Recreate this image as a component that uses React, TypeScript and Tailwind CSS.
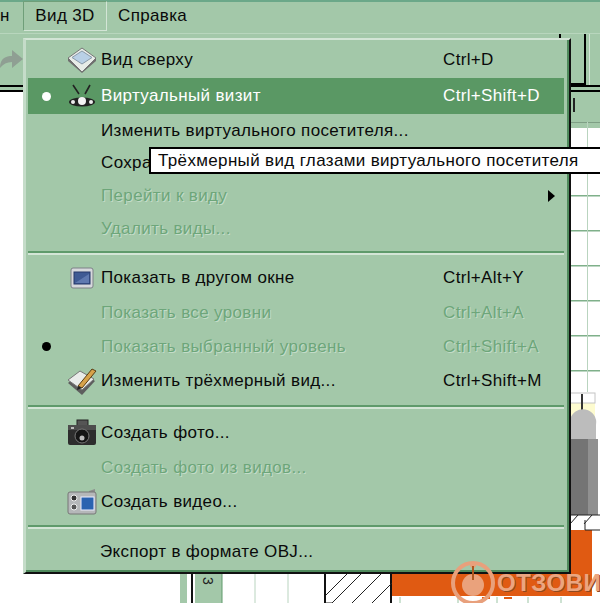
const FONT = "font-['Liberation_Sans',sans-serif]";

type Item = {
  label: string;
  row: string;
  keys?: string;
  icon?: React.ReactNode;
  bullet?: boolean;
  disabled?: boolean;
  active?: boolean;
  arrow?: boolean;
  labelClass?: string;
};

function TopViewIcon() {
  return (
    <svg width="30" height="28" viewBox="0 0 30 28">
      <path d="M15 2 L29 12 L15 26 L1 12 Z" fill="#e8ece8" stroke="#777" />
      <path d="M15 5 L25 11.5 L15 18 L5 11.5 Z" fill="#b9d0e6" stroke="#8a9aa8" />
      <path d="M1 12 L15 26 L29 12 L29 15 L15 27 L1 15 Z" fill="#6f6f6f" />
    </svg>
  );
}

function VisitorIcon() {
  return (
    <svg width="30" height="28" viewBox="0 0 30 28">
      <path d="M6 3 L12 12 M23 3 L18 12" stroke="#222" strokeWidth="1.6" />
      <ellipse cx="15" cy="20" rx="13" ry="4.5" fill="#222" />
      <circle cx="15" cy="19" r="4" fill="#f4f4f4" />
      <circle cx="6" cy="20" r="2" fill="#eee" />
      <circle cx="24" cy="20" r="2" fill="#eee" />
    </svg>
  );
}

function WindowIcon() {
  return (
    <svg width="24" height="22" viewBox="0 0 24 22">
      <rect x="1" y="1" width="22" height="20" rx="2" fill="#d6d8dc" stroke="#7d8087" />
      <rect x="4" y="5" width="16" height="12" fill="#3f5a94" stroke="#27396a" />
      <path d="M5 16 L19 7 L19 16 Z" fill="#5f79b0" />
    </svg>
  );
}

function EditViewIcon() {
  return (
    <svg width="30" height="30" viewBox="0 0 30 30">
      <path d="M14 6 L28 15 L15 29 L1 17 Z" fill="#5e5e5e" />
      <path d="M13 5 L27 13 L15 24 L1 14 Z" fill="#e9ecea" stroke="#777" />
      <path d="M11 20 L25 3 L29 5 L15 22 Z" fill="#d7a24a" stroke="#5b3d12" />
      <path d="M11 20 L10 24 L15 22 Z" fill="#222" />
    </svg>
  );
}

function CameraIcon() {
  return (
    <svg width="30" height="28" viewBox="0 0 30 28">
      <rect x="10" y="1" width="11" height="6" fill="#555" stroke="#222" />
      <rect x="1" y="6" width="28" height="20" rx="2" fill="#2d2d2d" />
      <rect x="1" y="6" width="28" height="5" fill="#4d4d4d" />
      <circle cx="15" cy="17" r="7" fill="#151515" stroke="#777" />
      <circle cx="15" cy="19" r="2.5" fill="#bbb" />
      <rect x="4" y="8" width="3" height="2" fill="#bbb" />
    </svg>
  );
}

function VideoIcon() {
  return (
    <svg width="30" height="28" viewBox="0 0 30 28">
      <path d="M22 3 L28 1 L28 8 L22 8 Z" fill="#8c8c8c" />
      <rect x="1" y="4" width="28" height="22" rx="2" fill="#b5b7b9" stroke="#777" />
      <rect x="14" y="9" width="13" height="13" fill="#2a62b0" stroke="#eef" />
      <circle cx="7" cy="10" r="3" fill="#333" stroke="#eee" />
      <circle cx="7" cy="19" r="3" fill="#555" stroke="#eee" />
    </svg>
  );
}

const GROUPS: Item[][] = [
  [
    { label: 'Вид сверху', keys: 'Ctrl+D', icon: <TopViewIcon />, row: 'h-[36px]' },
    { label: 'Виртуальный визит', keys: 'Ctrl+Shift+D', icon: <VisitorIcon />, bullet: true, active: true, row: 'h-[36px]' },
    { label: 'Изменить виртуального посетителя...', row: 'h-[33px]' },
    { label: 'Сохранить вид', row: 'h-[32px]' },
    { label: 'Перейти к виду', disabled: true, arrow: true, row: 'h-[34px]' },
    { label: 'Удалить виды...', disabled: true, row: 'h-[32px]' },
  ],
  [
    { label: 'Показать в другом окне', keys: 'Ctrl+Alt+Y', icon: <WindowIcon />, row: 'h-[34px]' },
    { label: 'Показать все уровни', keys: 'Ctrl+Alt+A', disabled: true, row: 'h-[35px]' },
    { label: 'Показать выбранный уровень', keys: 'Ctrl+Shift+A', disabled: true, bullet: true, row: 'h-[33px]' },
    { label: 'Изменить трёхмерный вид...', keys: 'Ctrl+Shift+M', icon: <EditViewIcon />, row: 'h-[35px]' },
  ],
  [
    { label: 'Создать фото...', icon: <CameraIcon />, row: 'h-[34px]' },
    { label: 'Создать фото из видов...', disabled: true, row: 'h-[35px]' },
    { label: 'Создать видео...', icon: <VideoIcon />, row: 'h-[33px]' },
  ],
  [{ label: 'Экспорт в формате OBJ...', row: 'h-[31px]', labelClass: '-ml-px' }],
];

function MenuRow({ item }: { item: Item }) {
  const text = item.active
    ? 'text-white'
    : item.disabled
      ? 'text-[#6da67a] [text-shadow:1px_1px_0_#c4dcc8]'
      : 'text-[#0a0a0a]';
  return (
    <div className={`flex items-center ${item.row} ${item.active ? 'bg-[#5a9864]' : ''} ${text}`}>
      <div className="flex w-[35px] justify-center pl-[1px]">
        {item.bullet && (
          <span className={`h-[9px] w-[9px] rounded-full ${item.active ? 'bg-white' : 'bg-black'}`} />
        )}
      </div>
      <div className="flex w-[38px] justify-center">{item.icon}</div>
      <span className={`w-[342px] shrink-0 whitespace-nowrap ${item.labelClass ?? ''}`}>{item.label}</span>
      <span className="whitespace-nowrap">{item.keys}</span>
      {item.arrow && (
        <span className="ml-[105px] h-0 w-0 border-y-[6px] border-l-[7px] border-y-transparent border-l-black" />
      )}
    </div>
  );
}

function Separator({ h }: { h: string }) {
  return (
    <div className={`flex flex-col justify-center ${h}`}>
      <div className="h-[2px] bg-[#5f9a6b]" />
      <div className="h-[2px] bg-[#d3e5d6]" />
    </div>
  );
}

function PlanDrawing() {
  const vGreen = [600 - 13];
  const hGreen = [153, 195, 230, 265, 300, 335, 370];
  return (
    <svg width="600" height="511" viewBox="0 92 600 511" className="block">
      <rect x="0" y="92" width="600" height="511" fill="#fff" />
      {/* ruler and grid on the right */}
      <rect x="570" y="92" width="30" height="36" fill="#a3c8a9" />
      <rect x="570" y="122" width="30" height="1" fill="#7f9f85" />
      <rect x="573" y="98" width="2" height="14" fill="#222" />
      {hGreen.map((y) => (
        <rect key={y} x="570" y={y} width="30" height="1.5" fill="#7fb08a" />
      ))}
      {vGreen.map((x) => (
        <rect key={x} x={x} y="122" width="1" height="270" fill="#b9d4bf" />
      ))}
      {/* wall fragment */}
      <rect x="570" y="393" width="30" height="125" fill="#ffffff" />
      <rect x="570" y="393" width="25" height="38" fill="#fdfbcf" />
      <rect x="570" y="393" width="25" height="10" fill="#fff" stroke="#c4c4c4" />
      <rect x="581" y="394" width="2" height="20" fill="#333" />
      <path d="M570 440 V420 A13 13 0 0 1 596 425 V440 Z" fill="#bcbcbc" />
      <rect x="570" y="439" width="28" height="76" fill="#747474" />
      <rect x="588" y="439" width="10" height="76" fill="#909090" />
      <path d="M570 515 H600 M570 524 L578 515 M584 524 L592 515" stroke="#222" fill="none" />
      {/* orange block */}
      <rect x="392" y="530" width="200" height="66" fill="#e05a12" />
      <rect x="592" y="530" width="8" height="73" fill="#fff" />
      <path d="M400 597 V603 M458 597 V603 M497 597 V603 M528 597 V603 M561 597 V603" stroke="#9cc5a5" />
      <path d="M482 598 H490 M504 598 H512" stroke="#e05a12" strokeWidth="2" />
      <path d="M585 530 H600 M585 520 V530" stroke="#222" />
      {/* bottom ruler */}
      <rect x="180" y="573" width="7" height="30" fill="#a3c8a9" />
      <rect x="191" y="573" width="2" height="30" fill="#111" />
      <rect x="195" y="573" width="27" height="30" fill="#a3c8a9" />
      <path d="M222 573 V603" stroke="#5f9a6b" />
      <path d="M255 573 V603 M288 573 V603" stroke="#b9d4bf" />
      <text x="0" y="0" transform="translate(203 577) rotate(90)" fontSize="14" fontFamily="Liberation Sans" fill="#222">3</text>
      {/* hatching */}
      <rect x="324" y="573" width="68" height="30" fill="#fff" />
      <path d="M325 573 V603 M391 573 V603" stroke="#111" strokeWidth="2" />
      <path d="M326 595 L348 573 M326 603 L332 603 M332 603 L362 573 M352 603 L382 573 M372 603 L392 583" stroke="#222" fill="none" />
      <rect x="392" y="573" width="14" height="22" fill="#e05a12" />
    </svg>
  );
}

export default function App() {
  return (
    <div className={`relative flex h-[603px] w-[600px] flex-col overflow-hidden bg-white ${FONT} text-[17px] tracking-[0.35px] text-[#0a0a0a]`}>
      {/* menu bar */}
      <div className="h-[2px] bg-[#6ba889]" />
      <div className="flex h-[31px] items-center bg-[#a3c8a9] pb-[3px]">
        <span className="w-[23px]">н</span>
        <span className="flex h-[30px] w-[84px] items-center justify-center border border-t-[#6f9f79] border-r-[#d3e5d6] border-b-[#d3e5d6] border-l-[#6f9f79]">
          Вид 3D
        </span>
        <span className="ml-[11px]">Справка</span>
      </div>

      {/* toolbar */}
      <div className="flex h-[52px] items-center justify-between bg-[#a3c8a9] border-t border-[#b8d6bd]">
        <svg width="26" height="28" viewBox="0 0 26 28">
          <path d="M0 22 C0 12 6 10 12 10 V4 L23 13 L12 22 V16 C7 16 3 18 0 22 Z" fill="#8f9f93" />
        </svg>
        <div className="flex h-full items-stretch">
          <div className="flex w-[11px] items-center justify-end border-l-2 border-black">
            <span className="h-[3px] w-[4px] bg-black" />
          </div>
          <div className="w-[16px] border-r-2 border-b-2 border-black" />
          <div className="ml-[3px] w-[11px] border-l border-[#d3e5d6]" />
        </div>
      </div>
      <div className="flex h-[7px] flex-col justify-between border-b-2 border-t-2 border-black bg-[#a3c8a9]" />

      <PlanDrawing />

      {/* 3D view menu */}
      <div className="absolute left-[23px] top-[38px] h-[536px] w-[548px] border-t-2 border-r-2 border-b-2 border-l-[3px] border-t-[#d3e5d6] border-r-[#111] border-b-[#111] border-l-[#c5dcc9] bg-[#a3c8a9]">
        <div className="border-r-2 border-b-2 border-[#4f8a5c] h-full pl-[2px] pr-[3px] pt-[2px]">
          {GROUPS.map((group, g) => (
            <div key={g}>
              {g > 0 && <Separator h={g === 1 ? 'h-[16px]' : g === 2 ? 'h-[18px]' : 'h-[18px]'} />}
              {group.map((item) => (
                <MenuRow key={item.label} item={item} />
              ))}
            </div>
          ))}
        </div>
      </div>

      {/* tooltip */}
      <div className="absolute left-[149px] top-[147px] flex h-[27px] w-[470px] items-center whitespace-nowrap border-2 border-black bg-white pl-[7px]">
        Трёхмерный вид глазами виртуального посетителя
      </div>

      {/* watermark */}
      <div className="absolute left-[450px] top-[560px] flex items-center text-[#e9a27d]">
        <svg width="46" height="46" viewBox="0 0 46 46">
          <circle cx="23" cy="23" r="20" fill="none" stroke="#e8a07c" strokeWidth="4" />
          <circle cx="23" cy="25" r="11" fill="#eaa27c" />
          <circle cx="23" cy="5" r="3" fill="#e8a07c" />
          <rect x="22" y="6" width="2" height="14" fill="#b0561e" />
        </svg>
        <span className="ml-[1px] font-bold text-[24px] leading-none tracking-[0.5px] text-[#eba57f] [text-shadow:1px_1px_0_#8f4a20]">
          ОТЗОВИК
        </span>
      </div>
    </div>
  );
}
